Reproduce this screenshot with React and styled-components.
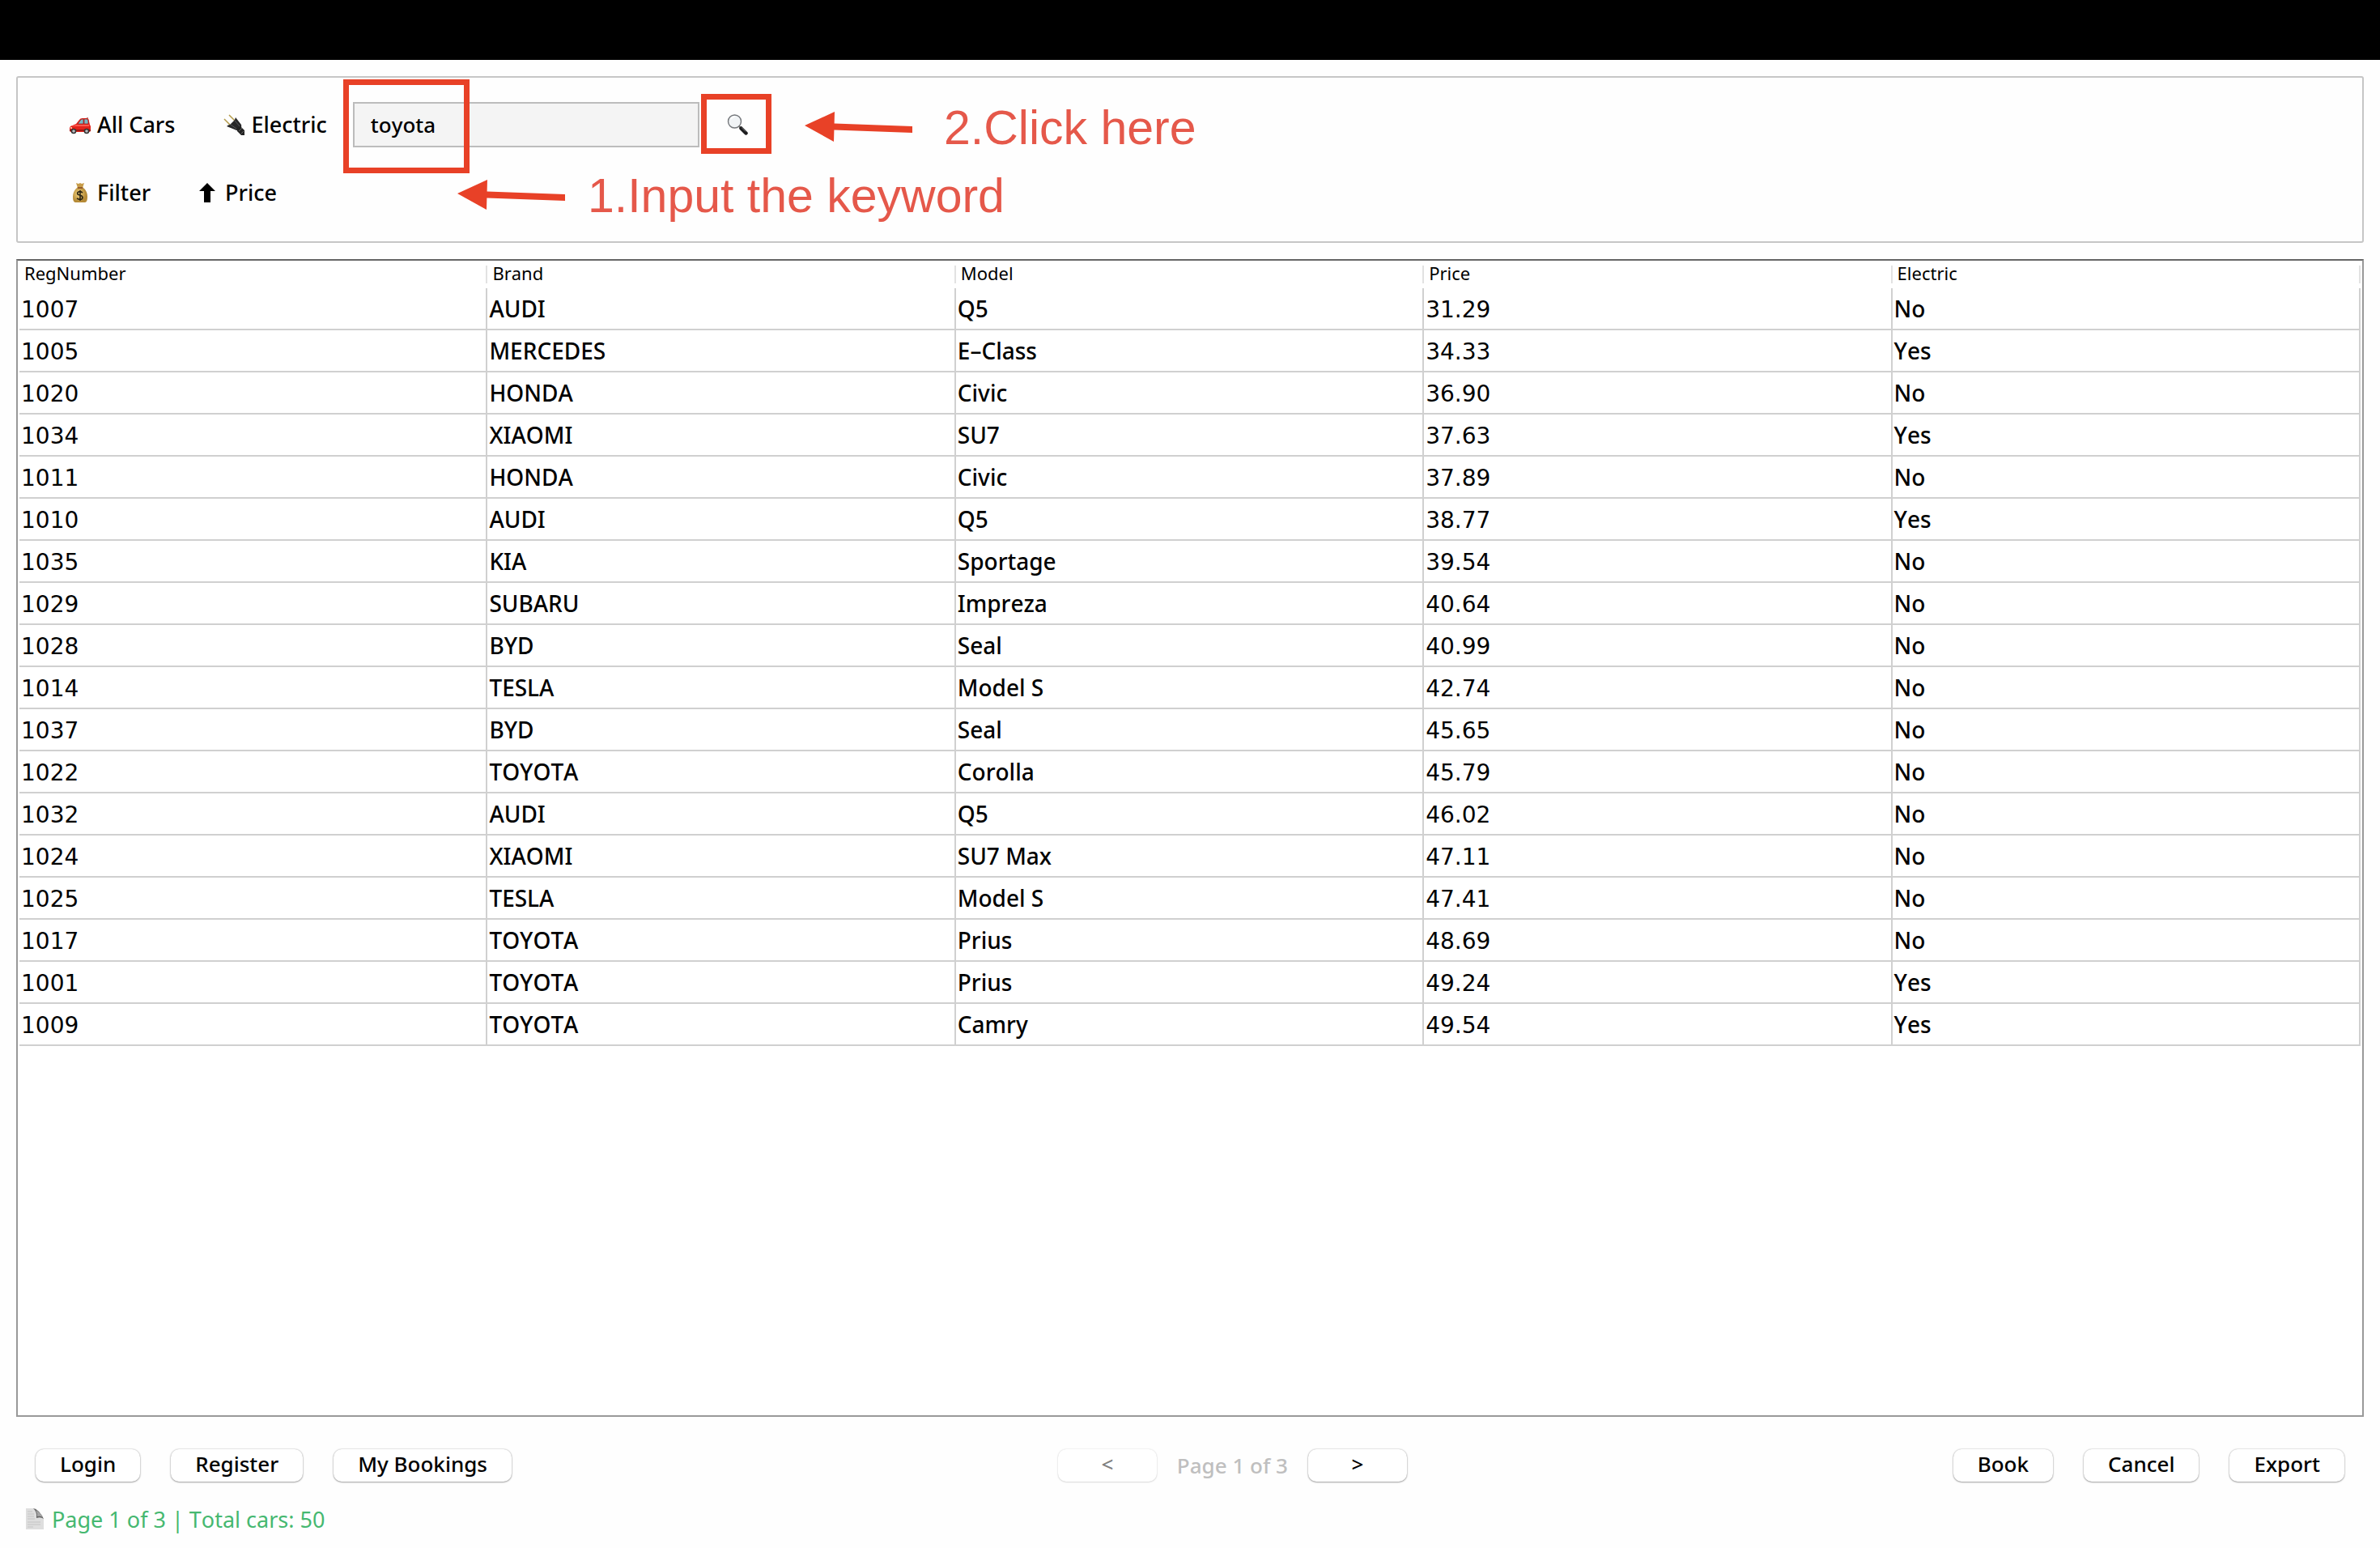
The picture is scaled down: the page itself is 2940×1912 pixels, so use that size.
import React, { useState } from "react";
import styled, { createGlobalStyle } from "styled-components";

const GlobalStyle = createGlobalStyle`
  * { box-sizing: border-box; }
  body {
    margin: 0;
    background: #fefefe;
    color: #000;
    font-family: "Noto Sans", "Open Sans", sans-serif;
    font-size: 26px;
    font-weight: 500;
    font-kerning: none;
  }
  button, input { font: inherit; font-kerning: none; color: inherit; }
`;

const Page = styled.div`
  display: flex;
  flex-direction: column;
  min-height: 100vh;
`;

const TitleStrip = styled.div`
  height: 74px;
  background: #000;
`;

const Content = styled.main`
  flex: 1;
  display: flex;
  flex-direction: column;
  gap: 20px;
  padding: 20px 20px 0;
`;

const Toolbar = styled.form`
  position: relative;
  padding: 16px 34px 18px;
  border: 2px solid #c6c6c6;
  border-radius: 3px;
`;

const ToolRow = styled.div`
  display: flex;
  align-items: center;
  height: 84px;
`;

const ToolButton = styled.button`
  display: flex;
  align-items: center;
  gap: 8px;
  height: 56px;
  padding: 0 30px;
  border: 0;
  background: none;
  font-size: 27px;
  line-height: 36px;
  white-space: nowrap;
`;

const SearchInput = styled.input`
  width: 428px;
  height: 56px;
  margin: 0 4px 0 2px;
  padding: 0 20px;
  border: 2px solid #bcbcbc;
  border-radius: 0;
  outline: 0;
  background: #f4f4f4;
`;

const Icon = styled.svg`
  flex: none;
  width: 26px;
  height: 26px;
`;

const NarrowIcon = styled(Icon)`
  width: 24px;
`;

const RedBox = styled.div`
  position: absolute;
  left: ${(p) => p.$x}px;
  top: ${(p) => p.$y}px;
  width: ${(p) => p.$w}px;
  height: ${(p) => p.$h}px;
  border: 7px solid #e84127;
  pointer-events: none;
`;

const Note = styled.div`
  position: absolute;
  left: ${(p) => p.$x}px;
  top: ${(p) => p.$y}px;
  display: flex;
  align-items: center;
  gap: ${(p) => p.$gap}px;
  color: #e5584a;
  font: 59px/68px "Liberation Sans", Arial, sans-serif;
  white-space: nowrap;
  pointer-events: none;
`;

const NoteText = styled.span`
  padding-top: 4px;
`;

const TableFrame = styled.section`
  flex: 1;
  padding: 0 2px;
  border: 2px solid #999;
  border-top-color: #666;
  background: #fff;
`;

const CarTable = styled.table`
  width: 100%;
  table-layout: fixed;
  border-collapse: separate;
  border-spacing: 0;
`;

const HeadCell = styled.th`
  height: 34px;
  padding: 0 6px;
  background: linear-gradient(#e2e2e2, #e2e2e2) right 6px / 2px 22px no-repeat;
  font-size: 22px;
  font-weight: 400;
  line-height: 30px;
  text-align: left;
  vertical-align: top;
`;

const Cell = styled.td`
  height: 52px;
  padding: ${(p) => (p.$numeric ? "3px 2px 0" : "0 2px")};
  border-right: 2px solid #d0d0d0;
  border-bottom: 2px solid #d0d0d0;
  font-family: ${(p) => (p.$numeric ? '"DejaVu Sans", sans-serif' : "inherit")};
  font-size: 28px;
  line-height: 40px;
`;

const ActionBar = styled.div`
  display: flex;
  align-items: center;
  justify-content: space-between;
  margin-top: 20px;
  padding: 0 24px;
`;

const ButtonGroup = styled.div`
  display: flex;
  align-items: center;
  gap: ${(p) => p.$gap}px;
`;

const PushButton = styled.button`
  min-width: 122px;
  height: 40px;
  padding: 0 30px 4px;
  border: 0;
  border-radius: 10px;
  background: #fff;
  box-shadow: 0 0 2px rgba(0, 0, 0, 0.3), 0 1px 2px rgba(0, 0, 0, 0.3);
  line-height: 36px;
  white-space: nowrap;

  &:disabled {
    color: #808080;
    box-shadow: 0 0 2px rgba(0, 0, 0, 0.16), 0 1px 2px rgba(0, 0, 0, 0.1);
  }
`;

const PageLabel = styled.span`
  color: #bfbfbf;
  line-height: 36px;
`;

const StatusBar = styled.footer`
  display: flex;
  align-items: center;
  gap: 9px;
  height: 60px;
  margin: 16px 0 6px;
  padding: 0 31px;
  color: #45b870;
  font-size: 27px;
  font-weight: 400;
`;

const ArrowSvg = styled.svg`
  flex: none;
  width: 134px;
  height: 38px;
`;

function CarIcon() {
  return (
    <Icon viewBox="0 0 26 26" aria-hidden="true">
      <path d="M22 4v4" stroke="#7b1a15" strokeWidth="1" />
      <path d="M1 15l7-3 4-5q1-2 4-2h5q3 0 3 4l1 4 1 2v5q0 2-2 2H2q-2 0-2-2v-3z" fill="#e3231c" />
      <path d="M10 12l3-4q1-2 3-2h1v6zM18 6h3q2 0 2 3v3h-5z" fill="#79b9c6" stroke="#9c1d1a" strokeWidth=".7" />
      <path d="M1 15l8-2h15v2H3z" fill="#ff5a4e" />
      <path d="M0 19h26v2H0z" fill="#9f1713" />
      <circle cx="5" cy="21" r="3.3" fill="#333" />
      <circle cx="5" cy="21" r="1.8" fill="#b9bcc0" />
      <circle cx="21" cy="21" r="3.3" fill="#333" />
      <circle cx="21" cy="21" r="1.8" fill="#b9bcc0" />
      <circle cx="2" cy="17" r="1" fill="#fff2c2" />
    </Icon>
  );
}

function PlugIcon() {
  return (
    <Icon viewBox="0 0 26 26" aria-hidden="true">
      <path d="M7 1l7 7M1 6l7 7" stroke="#b39a4a" strokeWidth="1.5" />
      <path d="M15 4l7 9q1 4-2 6t-6 0L4 15q2-2 4-2l6-6z" fill="#262628" />
      <path d="M14 8l6 7M9 13l7 5" stroke="#55565a" strokeWidth="1" />
      <path d="M17 17l4-2 5 5v6h-4l-5-5z" fill="#222" />
      <path d="M19 21l4-4M22 24l3-3" stroke="#777" strokeWidth=".8" />
    </Icon>
  );
}

function MoneyIcon() {
  return (
    <Icon viewBox="0 0 26 26" aria-hidden="true">
      <defs>
        <radialGradient id="bag" cx=".4" cy=".45">
          <stop offset="0" stopColor="#f2d37f" />
          <stop offset="1" stopColor="#b58a36" />
        </radialGradient>
      </defs>
      <path d="M8 1l3 1 2-1 2 1 3-1-2 6h-6z" fill="#c79c49" />
      <path d="M10 6h6q6 5 6 12 0 7-3 7H7q-3 0-3-7 0-7 6-12z" fill="url(#bag)" />
      <path d="M10 7h6" stroke="#8a4d27" strokeWidth="1.6" />
      <path d="M16 13q-3-2-5-1t-1 3l5 2q2 2 0 4-3 1-6-1M13 10v13" fill="none" stroke="#2d2614" strokeWidth="1.6" />
    </Icon>
  );
}

function UpIcon() {
  return (
    <NarrowIcon viewBox="0 0 24 26" aria-hidden="true">
      <path d="M10 1l10 10h-6v14H6V11H0z" fill="#000" />
    </NarrowIcon>
  );
}

function SearchIcon() {
  return (
    <Icon viewBox="0 0 26 26" aria-hidden="true">
      <circle cx="9.5" cy="9" r="8" fill="#f1f4f6" stroke="#74777b" strokeWidth="1.4" />
      <path d="M5 6q2-3 5-3" fill="none" stroke="#fff" strokeWidth="1.5" />
      <path d="M14.500 14.500l3 3" stroke="#777" strokeWidth="2" />
      <path d="M17.500 17.500l6 6" stroke="#1b1b1d" strokeWidth="4.500" strokeLinecap="round" />
      <path d="M18 16.500l5 5" stroke="#707276" strokeWidth="1" />
    </Icon>
  );
}

function DocIcon() {
  return (
    <NarrowIcon viewBox="0 0 24 26" aria-hidden="true">
      <path d="M1 0h12q3 2 4 8l6 5v13H1z" fill="#dedede" />
      <path d="M10 0q7 1 13 13-4-3-9-1 1-8-4-12z" fill="#626262" />
      <path d="M13 2q7 4 9 9-3-2-7-1 0-5-2-8z" fill="#a4a4a4" />
      <path d="M3 4h6M3 7h8M3 10h8M3 13h9M3 17h16M3 20h16M3 23h7" stroke="#c4c4c4" strokeWidth="1" />
    </NarrowIcon>
  );
}

function Arrow() {
  return (
    <ArrowSvg viewBox="0 0 134 38" aria-hidden="true">
      <path d="M0 18L37 1l-.4 14.500L133 19v8L36.400 23.500 36 38z" fill="#e84127" />
    </ArrowSvg>
  );
}

const HEADERS = ["RegNumber", "Brand", "Model", "Price", "Electric"];

const CARS = [
  ["1007", "AUDI", "Q5", "31.29", "No"],
  ["1005", "MERCEDES", "E–Class", "34.33", "Yes"],
  ["1020", "HONDA", "Civic", "36.90", "No"],
  ["1034", "XIAOMI", "SU7", "37.63", "Yes"],
  ["1011", "HONDA", "Civic", "37.89", "No"],
  ["1010", "AUDI", "Q5", "38.77", "Yes"],
  ["1035", "KIA", "Sportage", "39.54", "No"],
  ["1029", "SUBARU", "Impreza", "40.64", "No"],
  ["1028", "BYD", "Seal", "40.99", "No"],
  ["1014", "TESLA", "Model S", "42.74", "No"],
  ["1037", "BYD", "Seal", "45.65", "No"],
  ["1022", "TOYOTA", "Corolla", "45.79", "No"],
  ["1032", "AUDI", "Q5", "46.02", "No"],
  ["1024", "XIAOMI", "SU7 Max", "47.11", "No"],
  ["1025", "TESLA", "Model S", "47.41", "No"],
  ["1017", "TOYOTA", "Prius", "48.69", "No"],
  ["1001", "TOYOTA", "Prius", "49.24", "Yes"],
  ["1009", "TOYOTA", "Camry", "49.54", "Yes"],
];

export default function App() {
  const [keyword, setKeyword] = useState("toyota");

  return (
    <Page>
      <GlobalStyle />
      <TitleStrip />
      <Content>
        <Toolbar onSubmit={(e) => e.preventDefault()}>
          <ToolRow>
            <ToolButton type="button"><CarIcon />All Cars</ToolButton>
            <ToolButton type="button"><PlugIcon />Electric</ToolButton>
            <SearchInput
              aria-label="Search keyword"
              value={keyword}
              onChange={(e) => setKeyword(e.target.value)}
            />
            <ToolButton type="submit" aria-label="Search"><SearchIcon /></ToolButton>
          </ToolRow>
          <ToolRow>
            <ToolButton type="button"><MoneyIcon />Filter</ToolButton>
            <ToolButton type="button"><UpIcon />Price</ToolButton>
          </ToolRow>
          <RedBox $x={402} $y={2} $w={156} $h={116} />
          <RedBox $x={844} $y={20} $w={87} $h={74} />
          <Note $x={972} $y={24} $gap={38}><Arrow /><NoteText>2.Click here</NoteText></Note>
          <Note $x={543} $y={108} $gap={27}><Arrow /><NoteText>1.Input the keyword</NoteText></Note>
        </Toolbar>

        <TableFrame>
          <CarTable>
            <thead>
              <tr>
                {HEADERS.map((h) => <HeadCell key={h} scope="col">{h}</HeadCell>)}
              </tr>
            </thead>
            <tbody>
              {CARS.map((car) => (
                <tr key={car[0]}>
                  {car.map((value, i) => (
                    <Cell key={i} $numeric={i === 0 || i === 3}>{value}</Cell>
                  ))}
                </tr>
              ))}
            </tbody>
          </CarTable>
        </TableFrame>

        <ActionBar>
          <ButtonGroup $gap={38}>
            <PushButton type="button">Login</PushButton>
            <PushButton type="button">Register</PushButton>
            <PushButton type="button">My Bookings</PushButton>
          </ButtonGroup>
          <ButtonGroup $gap={25}>
            <PushButton type="button" disabled>&lt;</PushButton>
            <PageLabel>Page 1 of 3</PageLabel>
            <PushButton type="button">&gt;</PushButton>
          </ButtonGroup>
          <ButtonGroup $gap={38}>
            <PushButton type="button">Book</PushButton>
            <PushButton type="button">Cancel</PushButton>
            <PushButton type="button">Export</PushButton>
          </ButtonGroup>
        </ActionBar>
      </Content>
      <StatusBar><DocIcon />Page 1 of 3 | Total cars: 50</StatusBar>
    </Page>
  );
}
